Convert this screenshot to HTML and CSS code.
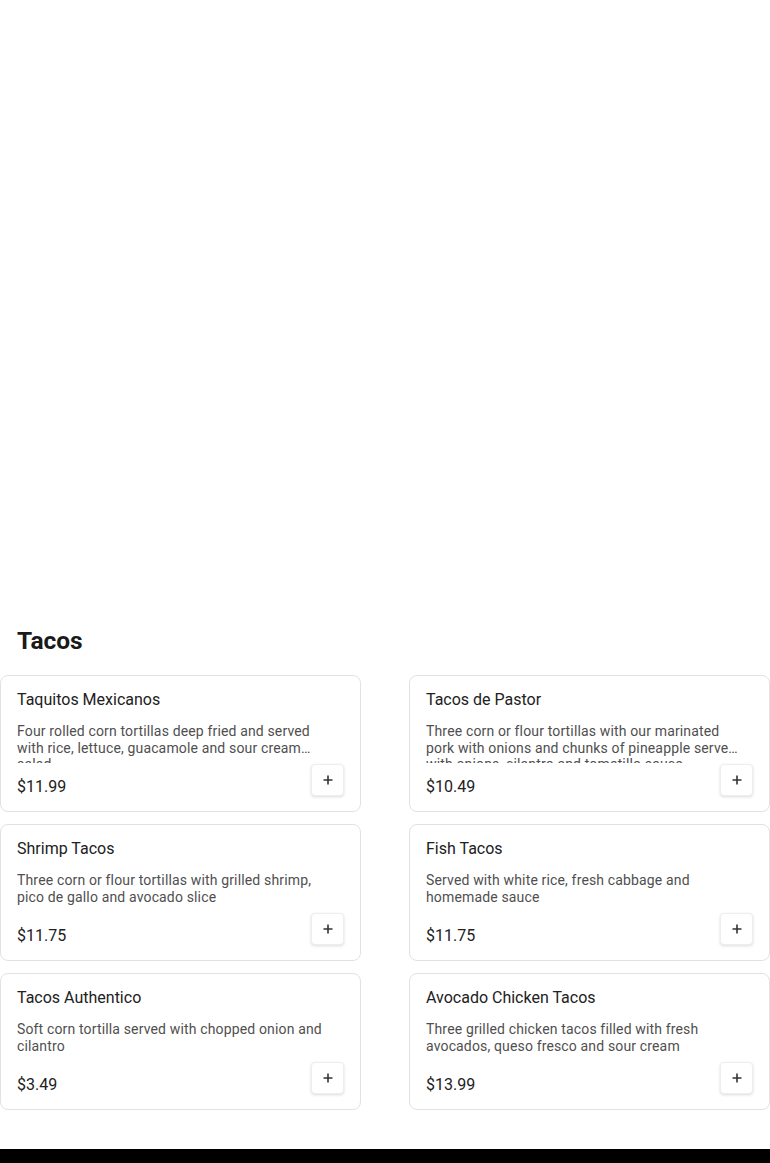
FILE: index.html
```html
<!DOCTYPE html>
<html>
<head>
<meta charset="utf-8">
<link rel="stylesheet" href="styles.css">
</head>
<body>
<div class="hero"></div>
<section class="category">
  <h2 class="cat-title">Tacos</h2>
  <div class="grid">
    <div class="card">
      <div class="name">Taquitos Mexicanos</div>
      <div class="desc">Four rolled corn tortillas deep fried and served with rice, lettuce, guacamole and sour cream salad</div>
      <div class="bottom"><span class="price">$11.99</span><button class="add"><svg width="12" height="12" viewBox="0 0 12 12"><path d="M6 1.5v9M1.5 6h9" stroke="#333" stroke-width="1.6"/></svg></button></div>
    </div>
    <div class="card">
      <div class="name">Tacos de Pastor</div>
      <div class="desc">Three corn or flour tortillas with our marinated pork with onions and chunks of pineapple served with onions, cilantro and tomatillo sauce</div>
      <div class="bottom"><span class="price">$10.49</span><button class="add"><svg width="12" height="12" viewBox="0 0 12 12"><path d="M6 1.5v9M1.5 6h9" stroke="#333" stroke-width="1.6"/></svg></button></div>
    </div>
    <div class="card">
      <div class="name">Shrimp Tacos</div>
      <div class="desc">Three corn or flour tortillas with grilled shrimp, pico de gallo and avocado slice</div>
      <div class="bottom"><span class="price">$11.75</span><button class="add"><svg width="12" height="12" viewBox="0 0 12 12"><path d="M6 1.5v9M1.5 6h9" stroke="#333" stroke-width="1.6"/></svg></button></div>
    </div>
    <div class="card">
      <div class="name">Fish Tacos</div>
      <div class="desc">Served with white rice, fresh cabbage and homemade sauce</div>
      <div class="bottom"><span class="price">$11.75</span><button class="add"><svg width="12" height="12" viewBox="0 0 12 12"><path d="M6 1.5v9M1.5 6h9" stroke="#333" stroke-width="1.6"/></svg></button></div>
    </div>
    <div class="card">
      <div class="name">Tacos Authentico</div>
      <div class="desc">Soft corn tortilla served with chopped onion and cilantro</div>
      <div class="bottom"><span class="price">$3.49</span><button class="add"><svg width="12" height="12" viewBox="0 0 12 12"><path d="M6 1.5v9M1.5 6h9" stroke="#333" stroke-width="1.6"/></svg></button></div>
    </div>
    <div class="card">
      <div class="name">Avocado Chicken Tacos</div>
      <div class="desc">Three grilled chicken tacos filled with fresh avocados, queso fresco and sour cream</div>
      <div class="bottom"><span class="price">$13.99</span><button class="add"><svg width="12" height="12" viewBox="0 0 12 12"><path d="M6 1.5v9M1.5 6h9" stroke="#333" stroke-width="1.6"/></svg></button></div>
    </div>
  </div>
</section>
<footer class="footer"></footer>
</body>
</html>
```
FILE: styles.css
```css
* { box-sizing: border-box; }
html, body { margin: 0; padding: 0; background: #fff; }
body { font-family: Roboto, "Liberation Sans", sans-serif; color: #212121; }
.hero { height: 620px; }
.category { padding: 0 0 39px; }
.cat-title {
  margin: 0;
  padding: 0 17px;
  font-size: 24.5px;
  font-weight: 700;
  line-height: 42px;
  color: #1a1a1a;
  height: 55px;
}
.grid {
  display: grid;
  grid-template-columns: 361px 361px;
  column-gap: 48px;
  row-gap: 12px;
}
.card {
  height: 137px;
  border: 1px solid #e2e2e2;
  border-radius: 8px;
  padding: 14px 16px 15px;
  display: flex;
  flex-direction: column;
}
.name {
  font-size: 16px;
  line-height: 20px;
  color: #212121;
}
.desc {
  margin-top: 13px;
  width: 312px;
  font-size: 14px;
  line-height: 16.6px;
  letter-spacing: 0.15px;
  color: #4f4f4f;
  height: 40px;
  overflow: hidden;
  display: -webkit-box;
  -webkit-box-orient: vertical;
  -webkit-line-clamp: 2;
}
.bottom {
  margin-top: auto;
  display: flex;
  justify-content: space-between;
  align-items: flex-end;
}
.price {
  font-size: 16px;
  line-height: 18px;
  color: #212121;
}
.add {
  width: 33px;
  height: 32px;
  border: 1px solid #eeeeee;
  border-radius: 4px;
  background: #fff;
  box-shadow: 0 1px 3px rgba(0,0,0,0.14);
  display: flex;
  align-items: center;
  justify-content: center;
  padding: 0;
}
.add svg { display: block; }
.footer { height: 14px; background: #000; }
```
